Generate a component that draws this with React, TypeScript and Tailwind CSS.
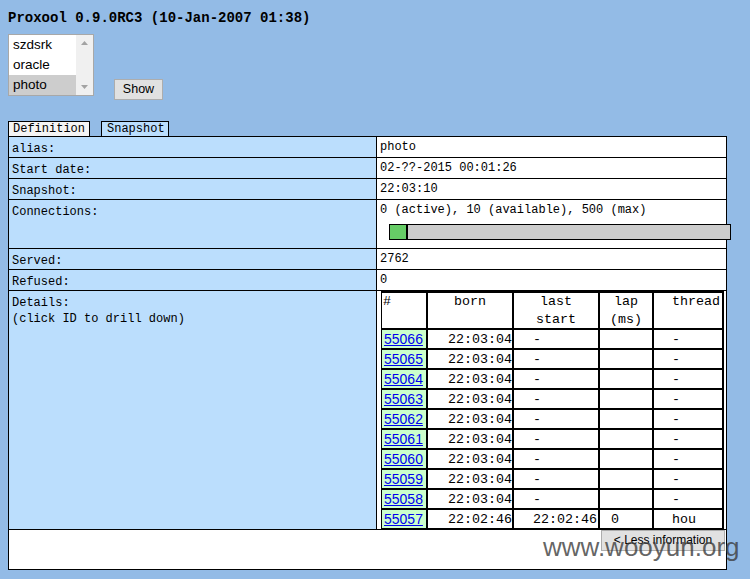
import React from "react";

const mono = { fontFamily: '"Liberation Mono", "DejaVu Sans Mono", monospace' };
const sans = { fontFamily: '"Liberation Sans", Arial, sans-serif' };

type Conn = { id: string; born: string; last: string; lap: string; thread: string };

const connections: Conn[] = [
  { id: "55066", born: "22:03:04", last: "-", lap: "", thread: "-" },
  { id: "55065", born: "22:03:04", last: "-", lap: "", thread: "-" },
  { id: "55064", born: "22:03:04", last: "-", lap: "", thread: "-" },
  { id: "55063", born: "22:03:04", last: "-", lap: "", thread: "-" },
  { id: "55062", born: "22:03:04", last: "-", lap: "", thread: "-" },
  { id: "55061", born: "22:03:04", last: "-", lap: "", thread: "-" },
  { id: "55060", born: "22:03:04", last: "-", lap: "", thread: "-" },
  { id: "55059", born: "22:03:04", last: "-", lap: "", thread: "-" },
  { id: "55058", born: "22:03:04", last: "-", lap: "", thread: "-" },
  { id: "55057", born: "22:02:46", last: "22:02:46", lap: "0", thread: "hou" },
];

function Row({
  label,
  children,
  h,
}: {
  label: React.ReactNode;
  children: React.ReactNode;
  h: string;
}) {
  return (
    <div className={`flex border-b border-black ${h}`}>
      <div className="w-[368px] shrink-0 border-r border-black bg-[#bbdefd] pl-[3px] pt-[4px] text-[12px] leading-[16px] text-black">
        {label}
      </div>
      <div className="min-w-0 flex-1 bg-white pl-[3px] pt-[2px] text-[12px] leading-[16px] text-black">
        {children}
      </div>
    </div>
  );
}

function DetailsTable() {
  return (
    <div
      className="grid h-[238px] w-[343px] grid-cols-[44px_84px_84px_52px_68px] grid-rows-[35px_repeat(10,18px)] gap-x-[2px] gap-y-[2px] border-l border-r-2 border-black bg-black pt-[2px] text-[13.33px] text-black"
      style={mono}
    >
      <div className="bg-white pl-[1px] leading-[18px]">#</div>
      <div className="bg-white text-center leading-[18px]">born</div>
      <div className="bg-white text-center leading-[18px]">
        last
        <br />
        start
      </div>
      <div className="bg-white text-center leading-[18px]">
        lap
        <br />
        (ms)
      </div>
      <div className="bg-white pl-[18px] leading-[18px]">thread</div>
      {connections.map((c) => (
        <React.Fragment key={c.id}>
          <div className="overflow-hidden bg-[#ccffcc] pl-[2px] text-[14px] leading-[19px]" style={sans}>
            <a href="#" className="text-[#0000ee] underline">
              {c.id}
            </a>
          </div>
          <div className="overflow-hidden bg-white text-right leading-[19px]">{c.born}</div>
          <div className="overflow-hidden bg-white pl-[19px] leading-[19px]">{c.last}</div>
          <div className="overflow-hidden bg-white pl-[11px] leading-[19px]">{c.lap}</div>
          <div className="overflow-hidden bg-white pl-[18px] leading-[19px]">{c.thread}</div>
        </React.Fragment>
      ))}
    </div>
  );
}

export default function App() {
  return (
    <div className="relative h-[579px] w-full overflow-hidden bg-[#93bbe6]" style={mono}>
      <div className="pl-[8px] pt-[9px] text-[14px] font-bold leading-[18px] text-black">
        Proxool 0.9.0RC3 (10-Jan-2007 01:38)
      </div>

      <div className="mt-[7px] flex items-end pl-[8px]">
        <div className="flex h-[62px] w-[86px] border border-[#a8a8a8] bg-white" style={sans}>
          <div className="flex w-[67px] flex-col text-[13.5px] leading-[20px] text-black">
            <div className="h-[20px] pl-[4px]">szdsrk</div>
            <div className="h-[20px] pl-[4px]">oracle</div>
            <div className="h-[20px] bg-[#cdcdcd] pl-[4px]">photo</div>
          </div>
          <div className="flex w-[17px] flex-col items-center justify-between bg-[#f0f0f0] py-[6px]">
            <svg width="7" height="4" viewBox="0 0 7 4">
              <path d="M0 4 L3.5 0 L7 4 Z" fill="#a3a3a3" />
            </svg>
            <svg width="7" height="4" viewBox="0 0 7 4">
              <path d="M0 0 L3.5 4 L7 0 Z" fill="#a3a3a3" />
            </svg>
          </div>
        </div>
        <button
          className="mb-[-4px] ml-[20px] h-[21px] w-[49px] border border-[#adadad] bg-[#e1e1e1] text-[12.5px] leading-[19px] text-black"
          style={sans}
        >
          Show
        </button>
      </div>

      <div className="mt-[25px] flex gap-[11px] pl-[8px] text-[12px] leading-[14px] text-black">
        <div className="h-[15px] w-[82px] border border-b-0 border-black bg-[#f4f4f4] pl-[4px]">Definition</div>
        <div className="h-[15px] w-[68px] border border-b-0 border-black bg-[#bbdefd] pl-[5px]">Snapshot</div>
      </div>

      <div className="ml-[8px] w-[719px] border border-black">
        <Row label="alias:" h="h-[21px]">photo</Row>
        <Row label="Start date:" h="h-[21px]">02-??-2015 00:01:26</Row>
        <Row label="Snapshot:" h="h-[21px]">22:03:10</Row>
        <Row label="Connections:" h="h-[49px]">
          <div>0 (active), 10 (available), 500 (max)</div>
          <div className="ml-[9px] mt-[6px] flex h-[16px] w-[342px] border border-black bg-[#cccccc]">
            <div className="w-[16px] bg-[#66cc66]" />
            <div className="w-[2px] bg-black" />
          </div>
        </Row>
        <Row label="Served:" h="h-[21px]">2762</Row>
        <Row label="Refused:" h="h-[21px]">0</Row>
        <div className="flex h-[239px] border-b border-black">
          <div className="w-[368px] shrink-0 border-r border-black bg-[#bbdefd] pl-[3px] pt-[4px] text-[12px] leading-[16px] text-black">
            Details:
            <br />
            (click ID to drill down)
          </div>
          <div className="min-w-0 flex-1 overflow-hidden bg-white pl-[4px]">
            <DetailsTable />
          </div>
        </div>
        <div className="flex h-[39px] justify-end bg-white pr-[1px]">
          <button
            className="h-[21px] w-[124px] border border-[#adadad] bg-[#e1e1e1] text-[12px] leading-[19px] text-black"
            style={sans}
          >
            &lt; Less information
          </button>
        </div>
      </div>

      <div
        className="pointer-events-none absolute left-[543px] top-[532px] text-[26px] leading-[30px] text-[#3c3c3c]/80"
        style={sans}
      >
        www.wooyun.org
      </div>
    </div>
  );
}
